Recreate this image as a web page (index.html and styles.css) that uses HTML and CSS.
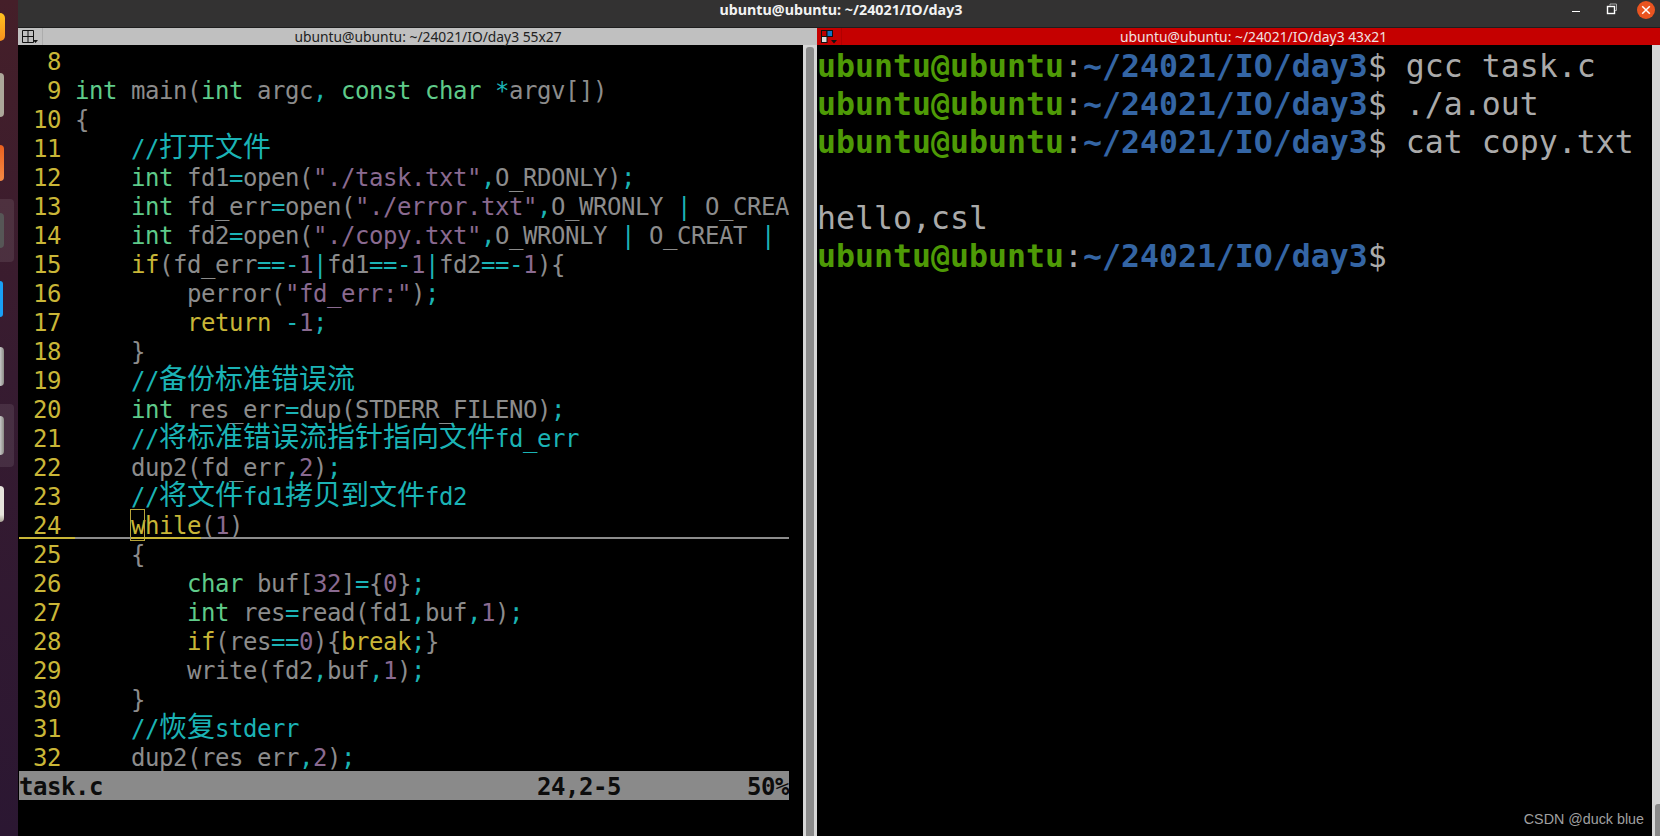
FILE: index.html
```html
<!DOCTYPE html>
<html lang="en">
<head>
<meta charset="utf-8">
<title>ubuntu@ubuntu: ~/24021/IO/day3</title>
<link rel="stylesheet" href="styles.css">
</head>
<body>
<div class="screen">
  <aside class="dock">
    <div class="dock-icon firefox"></div>
    <div class="dock-icon files"></div>
    <div class="dock-icon orange"></div>
    <div class="dock-slot"><div class="dock-icon dark"></div></div>
    <div class="dock-icon blue"></div>
    <div class="dock-icon metal"></div>
    <div class="dock-slot second"><div class="dock-icon metal inner"></div></div>
    <div class="dock-icon paper"></div>
  </aside>
  <div class="window">
    <header class="headerbar">
      <div class="window-title">ubuntu@ubuntu: ~/24021/IO/day3</div>
      <div class="controls">
        <span class="ctl-min"></span>
        <svg class="ctl-max" width="12" height="12" viewBox="0 0 12 12"><path d="M4 2.500V1h6.500v6.500H9" fill="none" stroke="#aaa" stroke-width="1"/><rect x="1.500" y="3.500" width="7" height="7" fill="none" stroke="#fff" stroke-width="1.400"/></svg>
        <span class="ctl-close"><svg width="18" height="18" viewBox="0 0 18 18"><path d="M5.200 5.200l7.600 7.600M12.800 5.200l-7.600 7.600" stroke="#fff" stroke-width="1.500" fill="none"/></svg></span>
      </div>
    </header>
    <div class="panes">
      <section class="pane left">
        <div class="pane-title grey">
          <span class="tile">
            <svg width="16" height="14" viewBox="0 0 16 14"><path d="M.5.5h11v12H.5zM6 .5v12M.5 6.500h11" fill="none" stroke="#111" stroke-width="1"/><path d="M11 10h5l-2.500 3z" fill="#111"/></svg>
          </span>
          <span class="pane-name">ubuntu@ubuntu: ~/24021/IO/day3 55x27</span>
        </div>
        <div class="pane-body">
          <div class="vim">
            <div class="code">
              <div class="row"><span class="n">  8 </span></div>
              <div class="row"><span class="n">  9 </span><span class="t">int</span> main(<span class="t">int</span> argc<span class="c">,</span> <span class="t">const char</span> <span class="c">*</span>argv[])</div>
              <div class="row"><span class="n"> 10 </span>{</div>
              <div class="row"><span class="n"> 11 </span>    <span class="c">//<span class="zh">打开文件</span></span></div>
              <div class="row"><span class="n"> 12 </span>    <span class="t">int</span> fd1<span class="c">=</span>open(<span class="s">"./task.txt"</span><span class="c">,</span>O_RDONLY)<span class="c">;</span></div>
              <div class="row"><span class="n"> 13 </span>    <span class="t">int</span> fd_err<span class="c">=</span>open(<span class="s">"./error.txt"</span><span class="c">,</span>O_WRONLY <span class="c">|</span> O_CREA</div>
              <div class="row"><span class="n"> 14 </span>    <span class="t">int</span> fd2<span class="c">=</span>open(<span class="s">"./copy.txt"</span><span class="c">,</span>O_WRONLY <span class="c">|</span> O_CREAT <span class="c">|</span></div>
              <div class="row"><span class="n"> 15 </span>    <span class="y">if</span>(fd_err<span class="c">==-</span><span class="s">1</span><span class="c">|</span>fd1<span class="c">==-</span><span class="s">1</span><span class="c">|</span>fd2<span class="c">==-</span><span class="s">1</span>){</div>
              <div class="row"><span class="n"> 16 </span>        perror(<span class="s">"fd_err:"</span>)<span class="c">;</span></div>
              <div class="row"><span class="n"> 17 </span>        <span class="y">return</span> <span class="c">-</span><span class="s">1</span><span class="c">;</span></div>
              <div class="row"><span class="n"> 18 </span>    }</div>
              <div class="row"><span class="n"> 19 </span>    <span class="c">//<span class="zh">备份标准错误流</span></span></div>
              <div class="row"><span class="n"> 20 </span>    <span class="t">int</span> res_err<span class="c">=</span>dup(STDERR_FILENO)<span class="c">;</span></div>
              <div class="row"><span class="n"> 21 </span>    <span class="c">//<span class="zh">将标准错误流指针指向文件</span>fd_err</span></div>
              <div class="row"><span class="n"> 22 </span>    dup2(fd_err<span class="c">,</span><span class="s">2</span>)<span class="c">;</span></div>
              <div class="row"><span class="n"> 23 </span>    <span class="c">//<span class="zh">将文件</span>fd1<span class="zh">拷贝到文件</span>fd2</span></div>
              <div class="row cur"><span class="n"> 24 </span>    <span class="y"><span class="cursor">w</span>hile</span>(<span class="s">1</span>)</div>
              <div class="row"><span class="n"> 25 </span>    {</div>
              <div class="row"><span class="n"> 26 </span>        <span class="t">char</span> buf[<span class="s">32</span>]<span class="c">=</span>{<span class="s">0</span>}<span class="c">;</span></div>
              <div class="row"><span class="n"> 27 </span>        <span class="t">int</span> res<span class="c">=</span>read(fd1<span class="c">,</span>buf<span class="c">,</span><span class="s">1</span>)<span class="c">;</span></div>
              <div class="row"><span class="n"> 28 </span>        <span class="y">if</span>(res<span class="c">==</span><span class="s">0</span>){<span class="y">break</span><span class="c">;</span>}</div>
              <div class="row"><span class="n"> 29 </span>        write(fd2<span class="c">,</span>buf<span class="c">,</span><span class="s">1</span>)<span class="c">;</span></div>
              <div class="row"><span class="n"> 30 </span>    }</div>
              <div class="row"><span class="n"> 31 </span>    <span class="c">//<span class="zh">恢复</span>stderr</span></div>
              <div class="row"><span class="n"> 32 </span>    dup2(res_err<span class="c">,</span><span class="s">2</span>)<span class="c">;</span></div>
            </div>
            <div class="status"><span>task.c</span><span class="ruler">24,2-5</span><span class="pct">50%</span></div>
          </div>
          <div class="scroll-left"><div class="thumb-left"></div></div>
        </div>
      </section>
      <section class="pane right">
        <div class="pane-title red">
          <span class="tile">
            <svg width="16" height="14" viewBox="0 0 16 14"><rect x=".5" y=".5" width="5.500" height="6" fill="#c00000" stroke="#111"/><rect x="6" y=".5" width="5.500" height="6" fill="#1573c4" stroke="#111"/><rect x=".5" y="6.500" width="5.500" height="6" fill="#ddd" stroke="#111"/><path d="M10 10h6l-3 3.500z" fill="#111"/></svg>
          </span>
          <span class="pane-name">ubuntu@ubuntu: ~/24021/IO/day3 43x21</span>
        </div>
        <div class="pane-body">
          <div class="term">
            <div class="line"><b class="u">ubuntu@ubuntu</b>:<b class="p">~/24021/IO/day3</b>$ gcc task.c</div>
            <div class="line"><b class="u">ubuntu@ubuntu</b>:<b class="p">~/24021/IO/day3</b>$ ./a.out</div>
            <div class="line"><b class="u">ubuntu@ubuntu</b>:<b class="p">~/24021/IO/day3</b>$ cat copy.txt</div>
            <div class="line"> </div>
            <div class="line">hello,csl</div>
            <div class="line"><b class="u">ubuntu@ubuntu</b>:<b class="p">~/24021/IO/day3</b>$</div>
            <div class="mark">CSDN @duck blue</div>
          </div>
          <div class="scroll-right"><div class="thumb-right"></div></div>
        </div>
      </section>
    </div>
  </div>
</div>
</body>
</html>
```
FILE: styles.css
```css
* { box-sizing: border-box; }
html, body { margin: 0; height: 100%; background: #000; overflow: hidden; }
.screen { display: flex; width: 1660px; height: 836px; }

/* dock */
.dock {
  width: 18px; flex: none; overflow: hidden;
  display: flex; flex-direction: column; align-items: flex-start;
  background: linear-gradient(180deg, #451f29 0%, #361b30 45%, #2b1732 100%);
}
.dock-icon { width: 4px; border-radius: 0 4px 4px 0; }
.firefox { width: 5px; height: 28px; margin-top: 13px; border-radius: 0 14px 14px 0; background: linear-gradient(180deg, #ffc21f, #f7911e); }
.files { height: 44px; margin-top: 32px; background: #aca79a; }
.orange { height: 36px; margin-top: 28px; background: linear-gradient(180deg, #e9601f, #f58a45); }
.dock-slot { width: 14px; height: 63px; margin-top: 18px; padding-top: 14px; background: rgba(255,255,255,.09); border-radius: 0 4px 4px 0; }
.dark { height: 35px; background: #565656; }
.blue { width: 3px; height: 36px; margin-top: 19px; background: #19a0f5; }
.metal { height: 39px; margin-top: 30px; background: linear-gradient(90deg, #c6c6c6, #8b8b85); }
.dock-slot.second { margin-top: 18px; padding-top: 12px; }
.metal.inner { margin-top: 0; }
.paper { height: 36px; margin-top: 19px; background: linear-gradient(180deg, #e6e4dc 80%, #a8a295); }

/* window */
.window { flex: 1; min-width: 0; display: flex; flex-direction: column; }
.headerbar {
  height: 28px; flex: none; position: relative;
  background: #333232; border-bottom: 1px solid #1e1e1e;
  display: flex; align-items: center; justify-content: center;
}
.window-title {
  font: 700 14.3px "Noto Sans", sans-serif; color: #f2f2f2;
  margin-top: -8px; margin-left: 4px; line-height: 18px;
}
.controls { position: absolute; right: 5px; top: 0; height: 18px; display: flex; align-items: center; }
.ctl-min { width: 8px; height: 1px; background: #fff; margin-right: 26px; margin-top: 5px; }
.ctl-max { margin-right: 19px; }
.ctl-close { width: 18px; height: 18px; border-radius: 50%; background: #e95420; display: block; margin-top: 1px; }
.ctl-close svg { display: block; }

.panes { flex: 1; min-height: 0; display: flex; }
.pane { display: flex; flex-direction: column; min-width: 0; }
.left { width: 799px; }
.right { flex: 1; }
.pane-title {
  height: 17px; flex: none; position: relative;
  display: flex; align-items: center; justify-content: center;
  font: 400 13.84px/17px "Noto Sans", sans-serif;
}
.pane-title.grey { background: #c0c0c0; color: #222; padding-left: 21px; }
.pane-title.red { background: #c50000; color: #f0e0e0; padding-left: 30px; }
.tile {
  position: absolute; left: 0; top: 0; width: 25px; height: 17px;
  padding: 2px 0 0 4px; border-right: 1px solid rgba(0,0,0,.1);
}
.tile svg { display: block; }
.pane-body { flex: 1; min-height: 0; display: flex; background: #000; }

/* vim */
.vim { width: 785px; flex: none; padding: 1px 14px 0 1px; }
.code {
  height: 725px; overflow: hidden; padding-top: 2px;
  font-family: "DejaVu Sans Mono", monospace; font-size: 24px; letter-spacing: -.45px;
  color: #8c8c8c;
}
.row { height: 29px; line-height: 29px; white-space: pre; position: relative; }
.n { color: #c9b637; }
.t { color: #5fcb8a; }
.c { color: #1bb3b5; }
.s { color: #8a6a90; }
.y { color: #c9b637; }
.zh { font-family: "Noto Sans CJK SC", sans-serif; font-size: 28px; letter-spacing: 0; line-height: 0; }
.cur::after {
  content: ""; position: absolute; left: 0; right: 0; bottom: 2px; height: 2px;
  background:
    linear-gradient(#c9b637, #c9b637) 0 0 / 56px 2px no-repeat,
    linear-gradient(#c9b637, #c9b637) 112px 0 / 70px 2px no-repeat,
    #8c8c8c;
}
.cursor { position: relative; }
.cursor::before {
  content: ""; position: absolute; left: -1px; right: 0; top: -3px; height: 30px;
  border: 1px solid #b7a43a;
}
.status {
  height: 29px; display: flex; background: #8a8a8a; color: #0c0c0c;
  font: 700 24px/33px "DejaVu Sans Mono", monospace; letter-spacing: -.45px;
  white-space: pre;
}
.ruler { margin-left: 434px; }
.pct { margin-left: auto; }

.scroll-left { width: 14px; flex: none; background: #d6d6d6; padding: 2px 3px 0; }
.thumb-left { height: 100%; background: #8a8a8a; border-radius: 3px 3px 0 0; }

/* terminal */
.term { flex: 1; position: relative; padding: 2px 0 0; color: #aaa;
  font-family: "DejaVu Sans Mono", monospace; font-size: 31.55px; }
.line { height: 38px; line-height: 38px; white-space: pre; }
.u { color: #4e9a06; }
.p { color: #3465a4; }
.mark { position: absolute; right: 8px; bottom: 8px; font: 400 14.3px/18px "Liberation Sans", sans-serif; color: #a0a0a0; }
.scroll-right { width: 8px; flex: none; background: #d6d6d6; display: flex; flex-direction: column; justify-content: flex-end; padding-left: 3px; }
.thumb-right { height: 32px; background: #8a8a8a; border-radius: 3px 0 0 0; }
```
